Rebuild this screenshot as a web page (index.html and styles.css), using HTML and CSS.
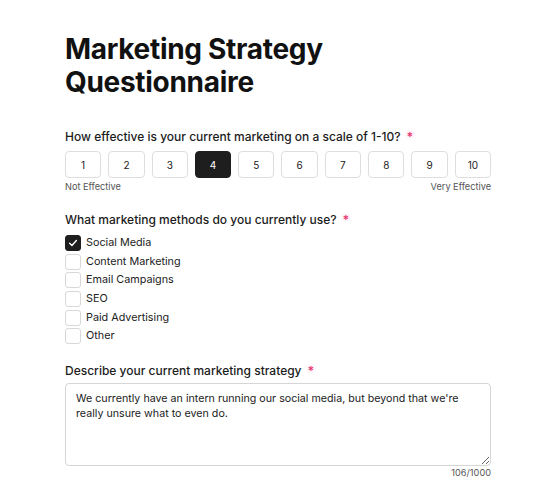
FILE: index.html
```html
<!DOCTYPE html>
<html>
<head>
<meta charset="utf-8">
<link rel="stylesheet" href="styles.css">
</head>
<body>
<main class="form">
  <h1 class="title">Marketing Strategy Questionnaire</h1>

  <section class="field field-scale">
    <div class="label">How effective is your current marketing on a scale of 1-10? <span class="req">*</span></div>
    <div class="scale">
      <button class="opt">1</button>
      <button class="opt">2</button>
      <button class="opt">3</button>
      <button class="opt selected">4</button>
      <button class="opt">5</button>
      <button class="opt">6</button>
      <button class="opt">7</button>
      <button class="opt">8</button>
      <button class="opt">9</button>
      <button class="opt">10</button>
    </div>
    <div class="scale-legend"><span>Not Effective</span><span>Very Effective</span></div>
  </section>

  <section class="field field-methods">
    <div class="label">What marketing methods do you currently use? <span class="req">*</span></div>
    <ul class="checks">
      <li class="check"><span class="box checked"><svg viewBox="0 0 16 16" width="12" height="12"><path d="M3.5 8.3 L6.6 11.2 L12.5 4.8" fill="none" stroke="#fff" stroke-width="1.9" stroke-linecap="round" stroke-linejoin="round"/></svg></span>Social Media</li>
      <li class="check"><span class="box"></span>Content Marketing</li>
      <li class="check"><span class="box"></span>Email Campaigns</li>
      <li class="check"><span class="box"></span>SEO</li>
      <li class="check"><span class="box"></span>Paid Advertising</li>
      <li class="check"><span class="box"></span>Other</li>
    </ul>
  </section>

  <section class="field field-text">
    <div class="label">Describe your current marketing strategy <span class="req">*</span></div>
    <textarea class="textarea">We currently have an intern running our social media, but beyond that we're really unsure what to even do.</textarea>
    <div class="counter">106/1000</div>
  </section>
</main>
</body>
</html>
```

FILE: styles.css
```css
* { box-sizing: border-box; }
html, body { margin: 0; padding: 0; background: #fff; }
body {
  font-family: Inter, "Noto Sans", sans-serif;
  color: #1a1a1a;
}
.form {
  width: 426px;
  margin-left: 65px;
  padding-top: 33px;
}
.title {
  margin: 0;
  font-size: 28px;
  line-height: 33px;
  font-weight: 700;
  letter-spacing: -0.3px;
  color: #111;
  width: 320px;
}
.field-scale { margin-top: 30px; }
.field-methods { margin-top: 19px; }
.field-text { margin-top: 19px; }
.label {
  font-size: 12px;
  line-height: 16px;
  font-weight: 500;
  color: #1c1c1c;
  margin-bottom: 6px;
}
.field-methods .label { margin-bottom: 7px; }
.field-text .label { margin-bottom: 4px; }
.req {
  color: #e5316b;
  margin-left: 3px;
  text-shadow: 0 0 4px rgba(236, 72, 153, 0.45);
}
.scale {
  display: flex;
  gap: 7px;
}
.opt {
  flex: 1;
  height: 27px;
  border: 1px solid #dedede;
  background: #fff;
  border-radius: 4px;
  font-family: Inter, sans-serif;
  font-size: 10px;
  color: #222;
  padding: 0;
}
.opt.selected {
  background: #1e1e1e;
  border-color: #1e1e1e;
  color: #fff;
}
.scale-legend {
  display: flex;
  justify-content: space-between;
  font-size: 9.2px;
  color: #555;
  margin-top: 3px;
  line-height: 12px;
}
.checks {
  list-style: none;
  margin: 0;
  padding: 0;
  display: flex;
  flex-direction: column;
  gap: 2.7px;
}
.check {
  display: flex;
  align-items: center;
  gap: 5px;
  font-size: 10.8px;
  line-height: 16px;
  color: #222;
}
.box {
  width: 16px;
  height: 16px;
  border: 1px solid #d8d8d8;
  border-radius: 3px;
  background: #fff;
  display: flex;
  align-items: center;
  justify-content: center;
  flex: none;
}
.box.checked {
  background: #1e1e1e;
  border-color: #1e1e1e;
}
.textarea {
  display: block;
  width: 426px;
  height: 83px;
  border: 1px solid #d6d6d6;
  border-radius: 4px;
  padding: 7px 10px;
  font-family: Inter, sans-serif;
  font-size: 10.7px;
  line-height: 15px;
  color: #222;
  resize: vertical;
}
.counter {
  text-align: right;
  font-size: 9.2px;
  color: #555;
  margin-top: 1px;
}
```
